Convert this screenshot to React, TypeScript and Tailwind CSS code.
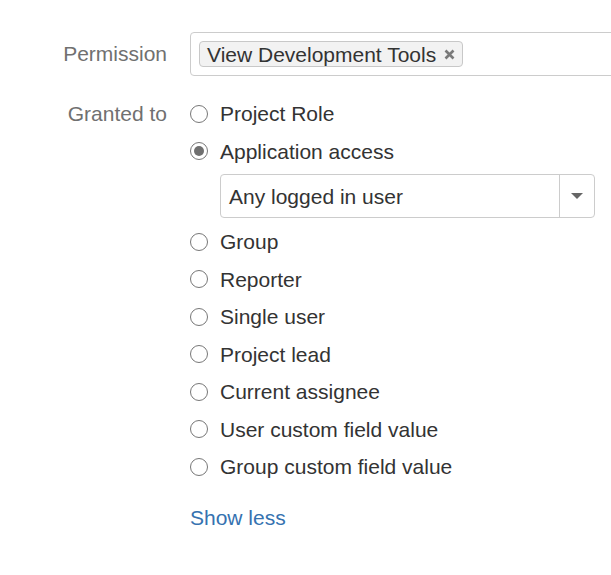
import React from "react";

const options = [
  "Project Role",
  "Application access",
  "Group",
  "Reporter",
  "Single user",
  "Project lead",
  "Current assignee",
  "User custom field value",
  "Group custom field value",
];

const Radio: React.FC<{ checked?: boolean }> = ({ checked }) => (
  <span className="w-[18px] h-[18px] rounded-full border border-[#777777] bg-white flex items-center justify-center shrink-0">
    {checked && <span className="w-[10px] h-[10px] rounded-full bg-[#6f6f6f]" />}
  </span>
);

const App: React.FC = () => {
  const [selected, setSelected] = React.useState<string>("Application access");

  return (
    <div
      className="w-full min-h-[575px] bg-white overflow-hidden text-[21px] text-[#333333]"
      style={{ fontFamily: '"Liberation Sans", Arial, sans-serif' }}
    >
      <div className="pt-[32px] flex flex-col">
        {/* Permission */}
        <div className="flex items-center">
          <div className="w-[167px] shrink-0 text-right text-[#707070]">Permission</div>
          <div className="ml-[23px] w-[440px] shrink-0 h-[44px] border border-[#cccccc] rounded-[4px] px-[8px] flex items-center">
            <span className="h-[26px] pl-[7px] pr-[7px] flex items-center gap-[8px] bg-[#f2f2f2] border border-[#c8c8c8] rounded-[4px] leading-none">
              View Development Tools
              <svg width="11" height="11" viewBox="0 0 11 11" className="mt-[1px]">
                <path d="M1.5 1.5 L9.5 9.5 M9.5 1.5 L1.5 9.5" stroke="#7a7a7a" strokeWidth="2.6" strokeLinecap="butt" />
              </svg>
            </span>
          </div>
        </div>

        {/* Granted to */}
        <div className="flex mt-[19px]">
          <div className="w-[167px] shrink-0 text-right text-[#707070] h-[37.5px] flex items-center justify-end">
            Granted to
          </div>
          <div className="ml-[23px] flex flex-col">
            {options.map((o) => (
              <React.Fragment key={o}>
                <label
                  className="h-[37.5px] flex items-center gap-[12px] cursor-pointer"
                  onClick={() => setSelected(o)}
                >
                  <Radio checked={selected === o} />
                  <span>{o}</span>
                </label>
                {o === "Application access" && selected === o && (
                  <div className="ml-[30px] mt-[4px] mb-[5px] w-[375px] h-[44px] border border-[#cccccc] rounded-[4px] flex">
                    <div className="flex-1 flex items-center pl-[8px] pt-[1px]">Any logged in user</div>
                    <div className="w-[35px] border-l border-[#cccccc] flex items-center justify-center">
                      <span className="w-0 h-0 border-l-[6px] border-r-[6px] border-t-[6px] border-l-transparent border-r-transparent border-t-[#666666]" />
                    </div>
                  </div>
                )}
              </React.Fragment>
            ))}
            <a href="#" className="mt-[20px] text-[#3572b0] leading-[24px]">
              Show less
            </a>
          </div>
        </div>
      </div>
    </div>
  );
};

export default App;
